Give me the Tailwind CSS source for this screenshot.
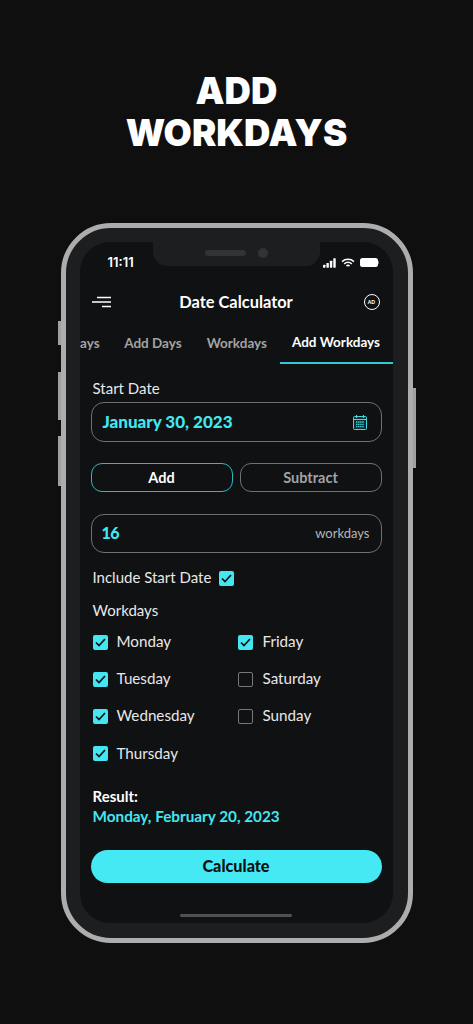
<!DOCTYPE html>
<html lang="en">
<head>
    <meta charset="UTF-8">
    <meta name="viewport" content="width=device-width, initial-scale=1.0">
    <title>Add Workdays</title>
    <script src="https://cdn.jsdelivr.net/npm/@tailwindcss/browser@4"></script>
</head>
<body class="bg-[#0f0f10] font-['Lato',sans-serif]">
    <div class="w-[473px] h-[1024px] overflow-hidden flex flex-col items-center">
        <!-- Headline -->
        <h1 class="pt-[70px] text-center text-white text-[36.5px] leading-[42px] font-black font-['Inter',sans-serif] w-[260px]">ADD WORKDAYS</h1>

        <!-- Phone frame -->
        <div class="relative mt-[69px] w-[352px] h-[720px] rounded-[50px] border-[5px] border-[#adadad] bg-[#1d1e20] p-[14px]">
            <!-- Side buttons -->
            <div class="absolute left-[-8px] top-[93px] w-[3px] h-[24px] bg-[#a0a0a0]"></div>
            <div class="absolute left-[-8px] top-[144px] w-[3px] h-[48px] bg-[#a0a0a0]"></div>
            <div class="absolute left-[-8px] top-[208px] w-[3px] h-[50px] bg-[#a0a0a0]"></div>
            <div class="absolute right-[-8px] top-[160px] w-[3px] h-[80px] bg-[#a0a0a0]"></div>

            <div class="relative w-[313px] h-[681px] rounded-[30px] overflow-hidden bg-[#101113] flex flex-col">
                <!-- Notch -->
                <div class="absolute left-[73px] top-0 w-[167px] h-[24px] rounded-b-[14px] bg-[#1d1e20] flex items-center justify-center gap-[12px] pb-[3px]">
                    <div class="w-[41px] h-[6px] rounded-full bg-[#323336]"></div>
                    <div class="w-[10px] h-[10px] rounded-full bg-[#323336]"></div>
                </div>

                <!-- Status bar -->
                <div class="h-[40px] shrink-0 flex items-center justify-between pt-[1px] pl-[28px] pr-[14px]">
                    <span class="text-white text-[13px] font-semibold font-['Inter',sans-serif]">11:11</span>
                    <div class="flex items-center gap-[5px]">
                        <svg width="13" height="10" viewBox="0 0 14 10" fill="#fff"><rect x="0" y="7" width="2.6" height="3" rx=".5"/><rect x="3.7" y="5" width="2.6" height="5" rx=".5"/><rect x="7.4" y="2.5" width="2.6" height="7.5" rx=".5"/><rect x="11.1" y="0" width="2.6" height="10" rx=".5"/></svg>
                        <svg width="14" height="10" viewBox="0 0 14 10" fill="none" stroke="#fff" stroke-width="1.5"><path d="M1 3.6C4.4.6 9.6.6 13 3.6"/><path d="M3.2 5.9c2.2-1.9 5.4-1.9 7.6 0"/><path d="M5.4 8c1-.8 2.2-.8 3.2 0"/></svg>
                        <div class="flex items-center">
                            <div class="w-[18px] h-[9px] rounded-[2.5px] bg-white"></div>
                            <div class="w-[1px] h-[3px] bg-[#777]"></div>
                        </div>
                    </div>
                </div>

                <!-- Header -->
                <div class="relative h-[40px] shrink-0 flex items-center justify-center">
                    <svg class="absolute left-[12px] top-[14px]" width="19" height="12" viewBox="0 0 19 12" fill="none" stroke="#fff" stroke-width="1.3"><path d="M5 1.5h14M0 6h19M10 10.5h9"/></svg>
                    <span class="text-white text-[16.4px] font-bold">Date Calculator</span>
                    <div class="absolute right-[13px] top-[12px] w-[16px] h-[16px] rounded-full border-[1.3px] border-white flex items-center justify-center">
                        <span class="text-white text-[5px] leading-none font-black">AD</span>
                    </div>
                </div>

                <!-- Tabs -->
                <div class="h-[42px] shrink-0 flex justify-end overflow-hidden text-[13.5px] font-bold text-[#a2a3a4] whitespace-nowrap">
                    <div class="pl-[12.5px] pr-[12px] pt-[1px] flex items-center shrink-0">Days</div>
                    <div class="px-[12.5px] pt-[1px] flex items-center shrink-0">Add Days</div>
                    <div class="px-[12.5px] pt-[1px] flex items-center shrink-0">Workdays</div>
                    <div class="w-[113px] pt-[1px] flex items-center justify-center shrink-0 text-white border-b-2 border-[#30c9d2]">Add Workdays</div>
                </div>

                <!-- Form -->
                <div class="px-[11px] flex flex-col">
                    <div class="mt-[15px] ml-[2px] h-[20px] leading-[18px] text-[15px] text-[#e8e8e8]">Start Date</div>
                    <div class="mt-[3px] h-[40px] rounded-[13px] border border-[#6f7072] flex items-center justify-between pl-[11px] pr-[14px]">
                        <span class="text-[#44e6f1] text-[17px] font-black">January 30, 2023</span>
                        <svg width="14" height="15" viewBox="0 0 14 15" fill="none" stroke="#3fd8e2">
                            <rect x=".5" y="1.5" width="13" height="13" rx="1" fill="#38c8d2" fill-opacity=".15"/>
                            <path d="M.5 4.5h13M3.5 0v3M10.5 0v3" stroke-width="1.2"/>
                            <path d="M3 7h8M3 9.3h8M3 11.6h8" stroke-width="1.3" stroke-dasharray="1.4 .7"/>
                        </svg>
                    </div>

                    <div class="mt-[21px] flex gap-[7px]">
                        <div class="flex-1 h-[29px] rounded-[11px] border border-[#2fb8c2] flex items-center justify-center text-white text-[14.5px] font-bold">Add</div>
                        <div class="flex-1 h-[29px] rounded-[11px] border border-[#6f7072] flex items-center justify-center text-[#a2a3a4] text-[14.5px] font-bold">Subtract</div>
                    </div>

                    <div class="mt-[22px] h-[39px] rounded-[13px] border border-[#6f7072] flex items-center justify-between pl-[10px] pr-[11px]">
                        <span class="text-[#44e6f1] text-[16px] font-black tracking-[-0.5px] pb-[2px]">16</span>
                        <span class="text-[#b4b5b6] text-[13px]">workdays</span>
                    </div>

                    <div class="mt-[15px] ml-[2px] h-[20px] flex items-center text-[15px] text-[#e8e8e8]">
                        <span class="pb-[2px]">Include Start Date</span>
                        <span class="ml-[8px] w-[15px] h-[15px] rounded-[2px] bg-[#44e6f1] flex items-center justify-center">
                            <svg width="11" height="9" viewBox="0 0 11 9" fill="none" stroke="#101113" stroke-width="1.7"><path d="M1 4.5l3 3 6-6.5"/></svg>
                        </span>
                    </div>

                    <div class="mt-[13px] ml-[2px] h-[20px] leading-[18px] text-[15px] text-[#e8e8e8]">Workdays</div>

                    <!-- Day checkboxes -->
                    <div class="mt-[11px] ml-[2px] grid grid-cols-[145px_1fr] gap-y-[17.3px] text-[15.2px] text-[#e8e8e8]">
                        <div class="h-[20px] flex items-center gap-[9px]">
                            <span class="w-[15px] h-[15px] rounded-[2px] bg-[#44e6f1] flex items-center justify-center"><svg width="11" height="9" viewBox="0 0 11 9" fill="none" stroke="#101113" stroke-width="1.7"><path d="M1 4.5l3 3 6-6.5"/></svg></span>
                            <span class="pb-[2px]">Monday</span>
                        </div>
                        <div class="h-[20px] flex items-center gap-[10px]">
                            <span class="w-[15px] h-[15px] rounded-[2px] bg-[#44e6f1] flex items-center justify-center"><svg width="11" height="9" viewBox="0 0 11 9" fill="none" stroke="#101113" stroke-width="1.7"><path d="M1 4.5l3 3 6-6.5"/></svg></span>
                            <span class="pb-[2px]">Friday</span>
                        </div>
                        <div class="h-[20px] flex items-center gap-[9px]">
                            <span class="w-[15px] h-[15px] rounded-[2px] bg-[#44e6f1] flex items-center justify-center"><svg width="11" height="9" viewBox="0 0 11 9" fill="none" stroke="#101113" stroke-width="1.7"><path d="M1 4.5l3 3 6-6.5"/></svg></span>
                            <span class="pb-[2px]">Tuesday</span>
                        </div>
                        <div class="h-[20px] flex items-center gap-[10px]">
                            <span class="w-[15px] h-[15px] rounded-[2px] border border-[#77787a]"></span>
                            <span class="pb-[2px]">Saturday</span>
                        </div>
                        <div class="h-[20px] flex items-center gap-[9px]">
                            <span class="w-[15px] h-[15px] rounded-[2px] bg-[#44e6f1] flex items-center justify-center"><svg width="11" height="9" viewBox="0 0 11 9" fill="none" stroke="#101113" stroke-width="1.7"><path d="M1 4.5l3 3 6-6.5"/></svg></span>
                            <span class="pb-[2px]">Wednesday</span>
                        </div>
                        <div class="h-[20px] flex items-center gap-[10px]">
                            <span class="w-[15px] h-[15px] rounded-[2px] border border-[#77787a]"></span>
                            <span class="pb-[2px]">Sunday</span>
                        </div>
                        <div class="h-[20px] flex items-center gap-[9px]">
                            <span class="w-[15px] h-[15px] rounded-[2px] bg-[#44e6f1] flex items-center justify-center"><svg width="11" height="9" viewBox="0 0 11 9" fill="none" stroke="#101113" stroke-width="1.7"><path d="M1 4.5l3 3 6-6.5"/></svg></span>
                            <span class="pb-[2px]">Thursday</span>
                        </div>
                    </div>

                    <div class="mt-[22px] ml-[2px] h-[20px] leading-[20px] text-[15px] font-bold text-white">Result:</div>
                    <div class="ml-[2px] h-[20px] leading-[20px] text-[15.3px] font-bold text-[#44e6f1]">Monday, February 20, 2023</div>

                    <div class="mt-[24px] h-[33px] rounded-full bg-[#44e9f4] flex items-center justify-center text-[#101113] text-[16.2px] font-black">Calculate</div>
                </div>

                <!-- Home indicator -->
                <div class="mt-[31px] self-center w-[112px] h-[3px] rounded-full bg-[#505153]"></div>
            </div>
        </div>
    </div>
</body>
</html>
